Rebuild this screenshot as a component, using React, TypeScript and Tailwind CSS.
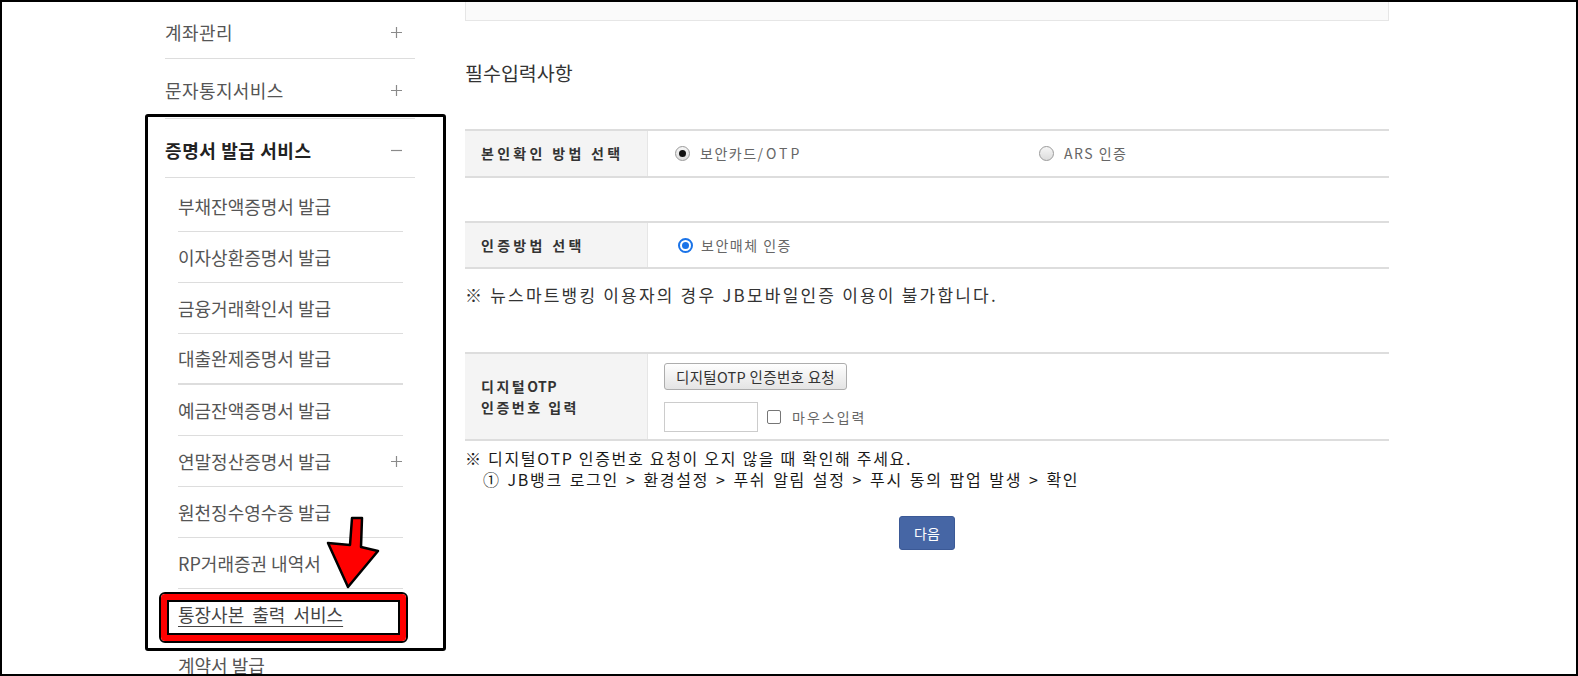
import React from "react";

function Plus() {
  return (
    <svg width="11" height="11" viewBox="0 0 11 11" className="shrink-0">
      <path d="M5.5 0v11M0 5.5h11" stroke="#8a8a8a" strokeWidth="1.2" />
    </svg>
  );
}

function Minus() {
  return (
    <svg width="11" height="11" viewBox="0 0 11 11" className="shrink-0">
      <path d="M0 5.5h11" stroke="#8a8a8a" strokeWidth="1.2" />
    </svg>
  );
}

function Radio({ checked, blue }: { checked?: boolean; blue?: boolean }) {
  if (blue) {
    return (
      <span className="flex h-[15px] w-[15px] shrink-0 items-center justify-center rounded-full border-2 border-[#1a73e8] bg-white">
        <span className="h-[7px] w-[7px] rounded-full bg-[#1a73e8]" />
      </span>
    );
  }
  return (
    <span className="flex h-[15px] w-[15px] shrink-0 items-center justify-center rounded-full border border-[#9a9a9a] bg-linear-to-b from-[#f6f6f6] to-[#dcdcdc]">
      {checked && <span className="h-[7px] w-[7px] rounded-full bg-[#111]" />}
    </span>
  );
}

const subMenus = [
  { label: "부채잔액증명서 발급" },
  { label: "이자상환증명서 발급" },
  { label: "금융거래확인서 발급" },
  { label: "대출완제증명서 발급", thick: true },
  { label: "예금잔액증명서 발급" },
  { label: "연말정산증명서 발급", plus: true },
  { label: "원천징수영수증 발급" },
  { label: "RP거래증권 내역서" },
  { label: "통장사본 출력 서비스", active: true },
  { label: "계약서 발급" },
];

export default function App() {
  return (
    <div className="relative h-[676px] w-[1578px] overflow-hidden border-2 border-black bg-white font-['Noto_Sans_CJK_KR','Noto_Sans',sans-serif]">
      <div className="flex pl-[163px]">
        {/* sidebar */}
        <aside className="w-[250px] shrink-0 text-[18px] text-[#555]">
          <div className="flex h-[57px] items-center justify-between border-b border-[#ddd] pt-[4px] pr-[13px] tracking-[0.4px]">
            <span>계좌관리</span>
            <Plus />
          </div>
          <div className="flex h-[60px] items-center justify-between border-b border-[#ddd] pt-[4px] pr-[13px] tracking-[0.4px]">
            <span>문자통지서비스</span>
            <Plus />
          </div>
          <div className="flex h-[59px] items-center justify-between border-b border-[#ddd] pt-[4px] pr-[13px] font-bold tracking-[0.6px] text-[#222]">
            <span>증명서 발급 서비스</span>
            <Minus />
          </div>
          <ul className="pl-[13px] pr-[12px] pt-[3px]">
            {subMenus.map((m) => (
              <li
                key={m.label}
                className={
                  m.thick
                    ? "flex h-[51px] items-center justify-between border-b-2 border-[#ddd] pr-[1px]"
                    : "flex h-[51px] items-center justify-between border-b border-[#ddd] pr-[1px]"
                }
              >
                {m.active ? (
                  <span className="text-[#444] underline underline-offset-[4px] [word-spacing:4px]">{m.label}</span>
                ) : (
                  <span>{m.label}</span>
                )}
                {m.plus && <Plus />}
              </li>
            ))}
          </ul>
        </aside>

        {/* main */}
        <main className="ml-[50px] w-[924px] text-[#333]">
          <div className="h-[19px] border-x border-b border-[#e6e6e6] bg-[#fafafa]" />
          <h3 className="mt-[39px] text-[19.5px] leading-[26px] text-[#333]">필수입력사항</h3>

          <div className="mt-[43px] flex h-[49px] border-y-2 border-[#ddd]">
            <div className="flex w-[183px] items-center border-r border-[#e6e6e6] bg-[#f4f4f4] pl-[16px] text-[14px] font-bold tracking-[3.3px] text-[#333]">
              본인확인 방법 선택
            </div>
            <div className="flex items-center pl-[27px] text-[14px] tracking-[1.5px] text-[#666]">
              <label className="flex w-[364px] items-center gap-[10px]">
                <Radio checked />
                <span>
                  보안카드<span className="tracking-[3px]">/OTP</span>
                </span>
              </label>
              <label className="flex items-center gap-[10px]">
                <Radio />
                ARS 인증
              </label>
            </div>
          </div>

          <div className="mt-[43px] flex h-[48px] border-y-2 border-[#ddd]">
            <div className="flex w-[183px] items-center border-r border-[#e6e6e6] bg-[#f4f4f4] pl-[16px] text-[14px] font-bold tracking-[3.3px] text-[#333]">
              인증방법 선택
            </div>
            <div className="flex items-center pl-[30px] text-[14px] tracking-[1.5px] text-[#666]">
              <label className="flex items-center gap-[8px]">
                <Radio blue />
                보안매체 인증
              </label>
            </div>
          </div>

          <p className="mt-[16px] text-[17px] leading-[20px] tracking-[2.2px] text-[#333]">
            ※ 뉴스마트뱅킹 이용자의 경우 JB모바일인증 이용이 불가합니다.
          </p>

          <div className="mt-[47px] flex h-[89px] border-y-2 border-[#ddd]">
            <div className="flex w-[183px] flex-col justify-center border-r border-[#e6e6e6] bg-[#f4f4f4] pl-[16px] text-[14px] font-bold leading-[21px] tracking-[2.5px] text-[#333]">
              <span>
                디지털<span className="tracking-[0.5px]">OTP</span>
              </span>
              <span>인증번호 입력</span>
            </div>
            <div className="flex flex-col gap-[12px] pl-[16px] pt-[9px]">
              <button className="h-[27px] w-[183px] rounded-[3px] border border-[#adadad] bg-linear-to-b from-[#fefefe] to-[#e4e4e4] text-[14.5px] tracking-[0.3px] text-[#333]">
                디지털OTP 인증번호 요청
              </button>
              <div className="flex items-center">
                <input className="h-[30px] w-[94px] border border-[#ccc] bg-white outline-none" />
                <span className="ml-[9px] h-[14px] w-[14px] rounded-[2px] border border-[#767676] bg-white" />
                <span className="ml-[11px] text-[14px] tracking-[2px] text-[#666]">마우스입력</span>
              </div>
            </div>
          </div>

          <div className="mt-[7px] text-[16px] leading-[21px] tracking-[1.7px] text-[#1a1a1a]">
            <p>※ 디지털OTP 인증번호 요청이 오지 않을 때 확인해 주세요.</p>
            <p className="pl-[18px] [word-spacing:1.6px]">
              ① JB뱅크 로그인 &gt; 환경설정 &gt; 푸쉬 알림 설정 &gt; 푸시 동의 팝업 발생 &gt; 확인
            </p>
          </div>

          <div className="mt-[26px] flex justify-center">
            <button className="h-[34px] w-[56px] rounded-[3px] border border-[#3b5996] bg-[#4666a5] text-[14px] text-white">
              다음
            </button>
          </div>
        </main>
      </div>

      {/* annotation: black frame around the certificate menu */}
      <div className="absolute left-[143px] top-[112px] h-[537px] w-[301px] rounded-[3px] border-[3px] border-black" />

      {/* annotation: red box */}
      <div className="absolute left-[157px] top-[590px] h-[51px] w-[249px] rounded-[6px] border-2 border-black">
        <div className="h-full w-full rounded-[4px] border-[6px] border-[#ff0000]">
          <div className="h-full w-full border-2 border-black" />
        </div>
      </div>

      {/* annotation: red arrow */}
      <svg className="absolute left-[323px] top-[511px] h-[80px] w-[60px]" viewBox="325 513 60 80">
        <polygon
          points="352,518 362,518 361,547 378,551 348,587 328,543 350,545"
          fill="#ff0000"
          stroke="#000"
          strokeWidth="2.5"
          strokeLinejoin="round"
        />
      </svg>
    </div>
  );
}
